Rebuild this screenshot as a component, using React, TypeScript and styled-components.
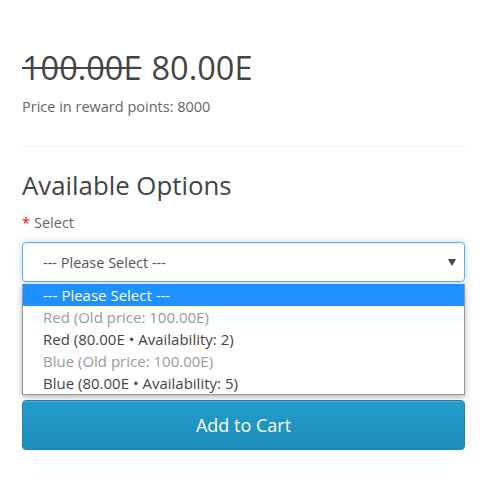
import React from "react";
import styled, { createGlobalStyle } from "styled-components";

const Global = createGlobalStyle`
  html, body { margin: 0; padding: 0; background: #fff; }
  body { font-family: "Open Sans", "DejaVu Sans", sans-serif; color: #666; }
  * { box-sizing: border-box; }
`;

const Page = styled.div`
  width: 500px;
  height: 500px;
  padding: 46px 35px 0 22px;
  display: flex;
  flex-direction: column;
`;

const PriceRow = styled.div`
  display: flex;
  align-items: baseline;
  gap: 10px;
  font-size: 32.5px;
  line-height: 44px;
  color: #444;
`;

const OldPrice = styled.span`
  text-decoration: line-through;
  text-decoration-thickness: 2px;
`;

const Points = styled.div`
  margin-top: 7px;
  font-size: 14.5px;
  line-height: 20px;
  color: #666;
`;

const Divider = styled.hr`
  margin: 29px 0 0;
  border: 0;
  border-top: 1px solid #eee;
  width: 443px;
`;

const Heading = styled.h3`
  margin: 21px 0 0;
  font-size: 25.8px;
  font-weight: 400;
  line-height: 34px;
  color: #444;
`;

const Label = styled.div`
  margin-top: 11px;
  font-size: 14.5px;
  line-height: 20px;
  color: #666;
`;

const Star = styled.span`
  color: #f00;
  margin-right: 4px;
`;

const SelectBox = styled.div`
  margin-top: 9px;
  width: 443px;
  height: 40px;
  border: 1px solid #66afe9;
  border-radius: 4px;
  box-shadow: inset 0 1px 1px rgba(0,0,0,0.075), 0 0 6px rgba(102,175,233,0.5);
  display: flex;
  align-items: center;
  justify-content: space-between;
  padding: 0 8px 0 20px;
  font-size: 14.5px;
  color: #555;
`;

const Arrow = styled.span`
  width: 0;
  height: 0;
  border-left: 4px solid transparent;
  border-right: 4px solid transparent;
  border-top: 7px solid #444;
`;

const Menu = styled.ul`
  list-style: none;
  margin: 2px 0 0;
  padding: 0;
  width: 443px;
  border: 1px solid #999;
  border-top: 0;
  background: #fff;
  box-shadow: 0 2px 6px rgba(0,0,0,0.3);
`;

const Item = styled.li<{ $active?: boolean; $disabled?: boolean }>`
  height: 22px;
  line-height: 22px;
  padding-left: 20px;
  font-size: 15px;
  background: ${(p) => (p.$active ? "#1e90ff" : "transparent")};
  color: ${(p) => (p.$active ? "#fff" : p.$disabled ? "#999" : "#444")};
`;

const Button = styled.button`
  margin-top: 5px;
  width: 443px;
  height: 50px;
  border: 1px solid #1b83ac;
  border-radius: 4px;
  background: linear-gradient(to bottom, #239dcb, #1e8dba);
  color: #fff;
  font-family: "Open Sans", "DejaVu Sans", sans-serif;
  font-size: 18px;
  box-shadow: inset 0 1px 0 rgba(255,255,255,0.2);
`;

const options = [
  { text: "--- Please Select ---", active: true },
  { text: "Red (Old price: 100.00E)", disabled: true },
  { text: "Red (80.00E \u2022 Availability: 2)" },
  { text: "Blue (Old price: 100.00E)", disabled: true },
  { text: "Blue (80.00E \u2022 Availability: 5)" },
];

export default function App() {
  return (
    <>
      <Global />
      <Page>
        <PriceRow>
          <OldPrice>100.00E</OldPrice>
          <span>80.00E</span>
        </PriceRow>
        <Points>Price in reward points: 8000</Points>
        <Divider />
        <Heading>Available Options</Heading>
        <Label>
          <Star>*</Star>Select
        </Label>
        <SelectBox>
          <span>--- Please Select ---</span>
          <Arrow />
        </SelectBox>
        <Menu>
          {options.map((o) => (
            <Item key={o.text} $active={o.active} $disabled={o.disabled}>
              {o.text}
            </Item>
          ))}
        </Menu>
        <Button>Add to Cart</Button>
      </Page>
    </>
  );
}
